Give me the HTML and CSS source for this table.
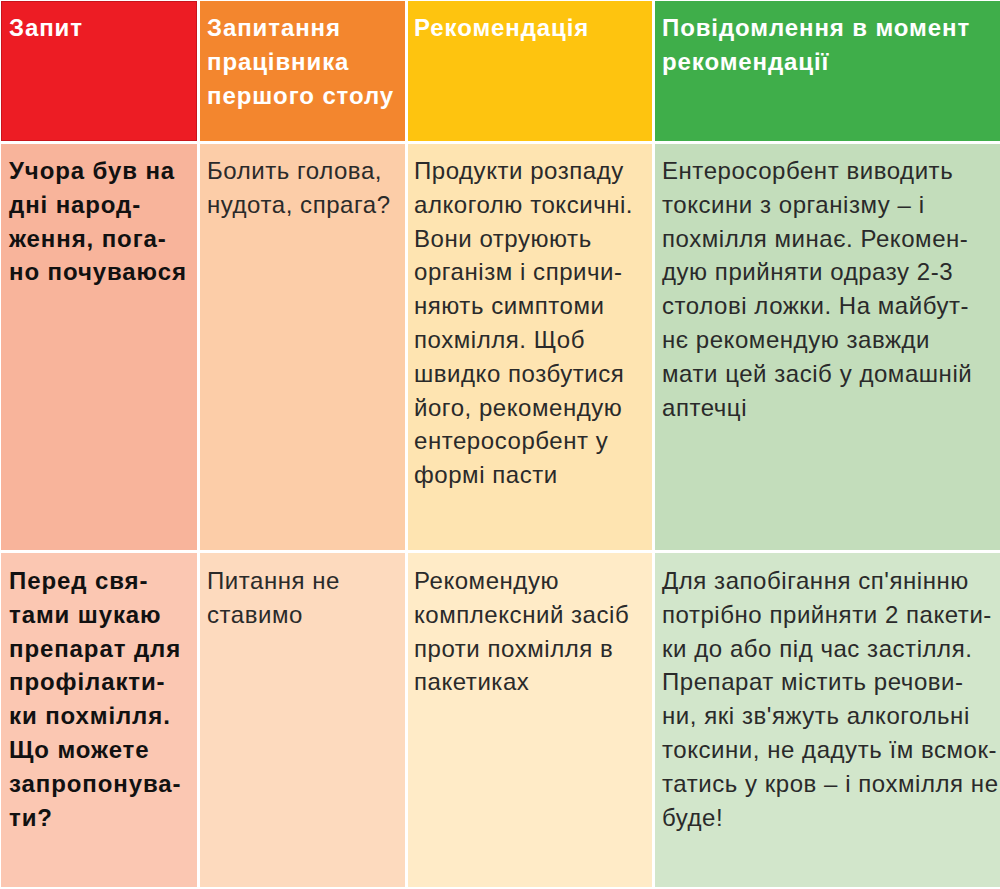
FILE: index.html
```html
<!DOCTYPE html>
<html lang="uk">
<head>
<meta charset="utf-8">
<title>Таблиця</title>
<link rel="stylesheet" href="styles.css">
</head>
<body>
<div class="table">
  <div class="cell head h1">Запит</div>
  <div class="cell head h2">Запитання<br>працівника<br>першого столу</div>
  <div class="cell head h3">Рекомендація</div>
  <div class="cell head h4">Повідомлення в момент<br>рекомендації</div>

  <div class="cell q r1c1">Учора був на<br>дні народ-<br>ження, пога-<br>но почуваюся</div>
  <div class="cell r1c2">Болить голова,<br>нудота, спрага?</div>
  <div class="cell r1c3">Продукти розпаду<br>алкоголю токсичні.<br>Вони отруюють<br>організм і спричи-<br>няють симптоми<br>похмілля. Щоб<br>швидко позбутися<br>його, рекомендую<br>ентеросорбент у<br>формі пасти</div>
  <div class="cell r1c4">Ентеросорбент виводить<br>токсини з організму – і<br>похмілля минає. Рекомен-<br>дую прийняти одразу 2-3<br>столові ложки. На майбут-<br>нє рекомендую завжди<br>мати цей засіб у домашній<br>аптечці</div>

  <div class="cell q r2c1">Перед свя-<br>тами шукаю<br>препарат для<br>профілакти-<br>ки похмілля.<br>Що можете<br>запропонува-<br>ти?</div>
  <div class="cell r2c2">Питання не<br>ставимо</div>
  <div class="cell r2c3">Рекомендую<br>комплексний засіб<br>проти похмілля в<br>пакетиках</div>
  <div class="cell r2c4">Для запобігання сп'янінню<br>потрібно прийняти 2 пакети-<br>ки до або під час застілля.<br>Препарат містить речови-<br>ни, які зв'яжуть алкогольні<br>токсини, не дадуть їм всмок-<br>татись у кров – і похмілля не<br>буде!</div>
</div>
</body>
</html>
```

FILE: styles.css
```css
html, body {
  margin: 0;
  padding: 0;
  background: #ffffff;
}

.table {
  display: grid;
  grid-template-columns: 196px 205px 244px 345px;
  grid-template-rows: 140px 406px 334px;
  gap: 3px;
  padding: 1px;
  width: 1000px;
  box-sizing: border-box;
  font-family: "Liberation Sans", Arial, sans-serif;
  font-size: 24px;
  line-height: 33.8px;
  letter-spacing: 0.55px;
}

.cell {
  padding: 10px 4px 0 7px;
  white-space: nowrap;
  color: #2a2a2a;
  box-sizing: border-box;
  overflow: hidden;
}

.head {
  color: #ffffff;
  font-weight: bold;
  letter-spacing: 0.9px;
  padding-top: 10px;
}

.q {
  font-weight: bold;
  color: #111111;
  letter-spacing: 0.9px;
  padding-left: 8px;
}

.h1 { background: #ed1c24; border: 1px solid #c8141c; padding-left: 7px; padding-top: 9px; }
.h2 { background: #f3862e; }
.h3 { background: #fec40f; padding-left: 6px; }
.h4 { background: #3fae4a; }

.r1c1 { background: #f8b49b; }
.r1c2 { background: #fccda8; }
.r1c3 { background: #fee4b1; padding-left: 6px; }
.r1c4 { background: #c3ddbb; }

.r2c1 { background: #fbc7b2; padding-top: 11px; }
.r2c2 { background: #fddabe; padding-top: 11px; }
.r2c3 { background: #ffebc7; padding-left: 6px; padding-top: 11px; }
.r2c4 { background: #d2e6cb; padding-top: 11px; }
```
